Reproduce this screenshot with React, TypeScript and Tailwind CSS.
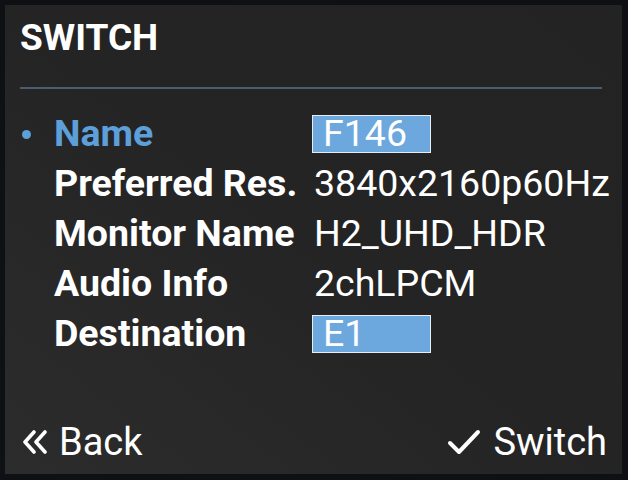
const rows: { label: string; value: string; boxed?: boolean; active?: boolean }[] = [
  { label: "Name", value: "F146", boxed: true, active: true },
  { label: "Preferred Res.", value: "3840x2160p60Hz" },
  { label: "Monitor Name", value: "H2_UHD_HDR" },
  { label: "Audio Info", value: "2chLPCM" },
  { label: "Destination", value: "E1", boxed: true },
];

function BackIcon() {
  return (
    <svg width="26" height="24" viewBox="0 0 26 24" fill="none" stroke="white" strokeWidth="3.6" strokeLinecap="round" strokeLinejoin="round">
      <path d="M12 2 L3 12 L12 22" />
      <path d="M23 2 L14 12 L23 22" />
    </svg>
  );
}

function CheckIcon() {
  return (
    <svg width="34" height="26" viewBox="0 0 34 26" fill="none" stroke="white" strokeWidth="4" strokeLinecap="round" strokeLinejoin="round">
      <path d="M3 14 L12 23 L31 3" />
    </svg>
  );
}

export default function App() {
  return (
    <div
      className="w-[628px] h-[480px] bg-[#0e1013] pt-[5px] pl-[5px] pr-[6px] pb-[6px] text-white"
      style={{ fontFamily: "Roboto, 'Liberation Sans', sans-serif" }}
    >
      <div className="h-full flex flex-col bg-linear-to-tr from-[#2c2c2c] via-[#242424] to-[#232323]">
        <div className="h-[64px] flex items-center pl-[15px] text-[37px] font-bold leading-none">
          SWITCH
        </div>
        <div className="mt-[18px] ml-[15px] mr-[20px] h-[2px] bg-[#4d5d70]" />

        <div className="mt-[20px] flex flex-col">
          {rows.map((row) => (
            <div key={row.label} className="h-[50px] flex items-center text-[37.5px] leading-none">
              <div className="w-[49px] pl-[17px] flex items-center">
                {row.active && <span className="w-[9px] h-[9px] rounded-full bg-[#5d9fd9]" />}
              </div>
              <div className={`w-[258px] font-bold ${row.active ? "text-[#5d9fd9]" : "text-white"}`}>
                {row.label}
              </div>
              {row.boxed ? (
                <div className="w-[119px] h-[38px] flex items-center pl-[10px] border border-[#e6edf5] bg-[#6ca7dd]">
                  {row.value}
                </div>
              ) : (
                <div className="pl-[2px]">{row.value}</div>
              )}
            </div>
          ))}
        </div>

        <div className="mt-auto h-[64px] flex items-center justify-between pl-[17px] pr-[15px] text-[38px] leading-none">
          <div className="flex items-center gap-[11px]">
            <BackIcon />
            <span>Back</span>
          </div>
          <div className="flex items-center gap-[12px]">
            <CheckIcon />
            <span>Switch</span>
          </div>
        </div>
      </div>
    </div>
  );
}
